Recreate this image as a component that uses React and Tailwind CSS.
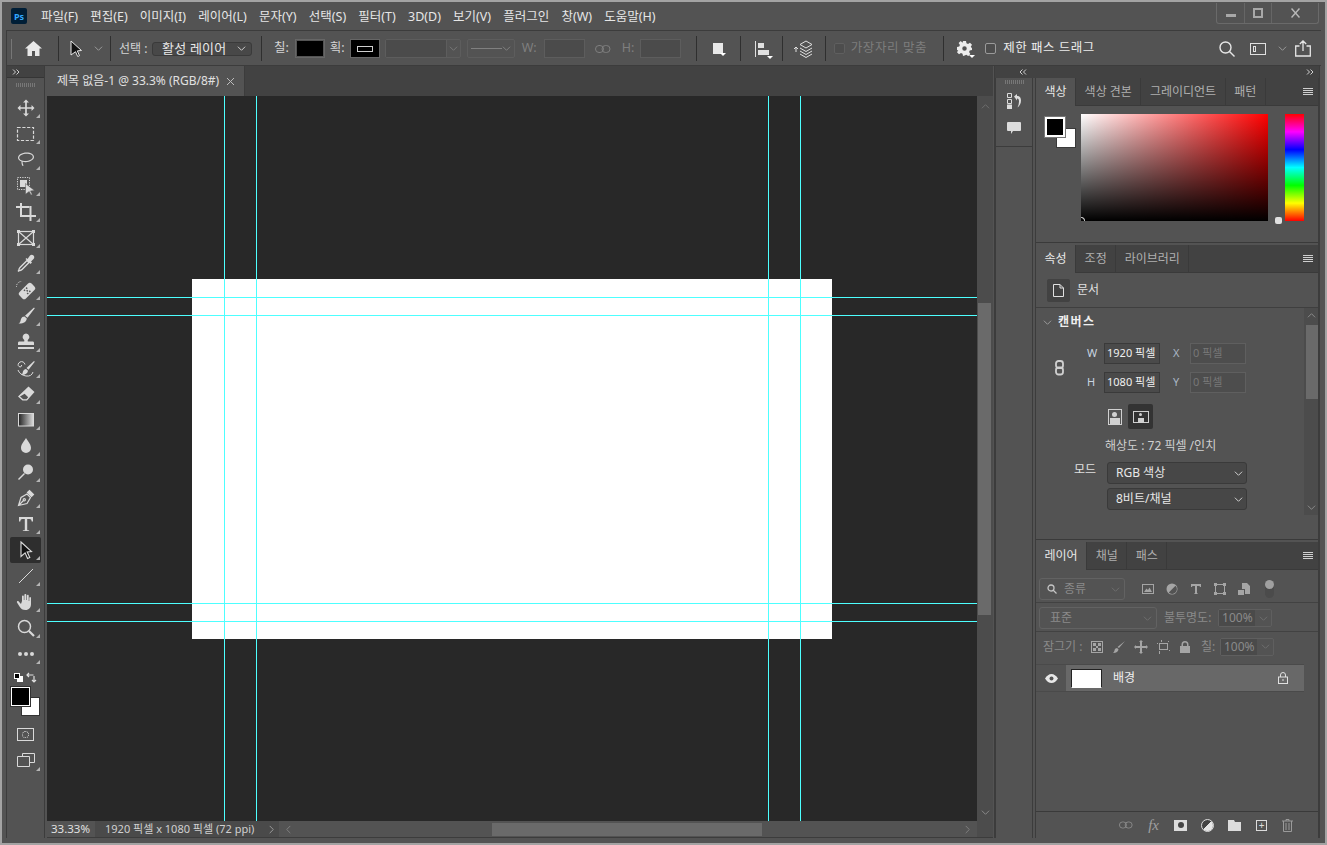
import React from 'react';

const G = ({ children, w = 20, h = 20, box = '0 0 20 20', className = '' }) => (
  <svg width={w} height={h} viewBox={box} className={className} fill="#d9d9d9" stroke="none">
    {children}
  </svg>
);

const Chevron = ({ color = '#9a9a9a', w = 9, dir = 'down' }) => (
  <svg width={w} height={w} viewBox="0 0 10 10" fill="none" stroke={color} strokeWidth="1.1">
    {dir === 'down' && <path d="M1 3l4 4 4-4" />}
    {dir === 'up' && <path d="M1 7l4-4 4 4" />}
    {dir === 'left' && <path d="M7 1L3 5l4 4" />}
    {dir === 'right' && <path d="M3 1l4 4-4 4" />}
  </svg>
);

const Double = ({ left }) => (
  <svg width="8" height="6" viewBox="0 0 8 6" fill="none" stroke="#d0d0d0" strokeWidth="1">
    {left ? <path d="M3.5 0.5L1 3l2.5 2.5M7 0.5L4.5 3 7 5.5" /> : <path d="M1 0.5L3.5 3 1 5.5M4.5 0.5L7 3 4.5 5.5" />}
  </svg>
);

const Grip = ({ w }) => (
  <div className={`h-[4px] ${w} bg-[repeating-linear-gradient(to_right,#777_0,#777_1px,transparent_1px,transparent_2px)]`} />
);

const Hamburger = () => (
  <div className="flex w-[10px] flex-col gap-[1px]">
    <div className="h-[1px] bg-[#cfcfcf]" />
    <div className="h-[1px] bg-[#cfcfcf]" />
    <div className="h-[1px] bg-[#cfcfcf]" />
    <div className="h-[1px] bg-[#cfcfcf]" />
  </div>
);

const toolIcons = [
  // move
  <path transform="translate(1.5 1.5) scale(.85)" d="M10 0l3.500 3.500h-2.500V9h5.500V6.500L20 10l-3.500 3.500V11H11v5.500h2.500L10 20l-3.500-3.500H9V11H3.500v2.500L0 10l3.500-3.500V9H9V3.500H6.500z" />,
  // marquee
  <rect x="1.5" y="3.5" width="16" height="13" fill="none" stroke="#d9d9d9" strokeWidth="1.2" strokeDasharray="3.200 1.600" />,
  // lasso
  <path d="M10.500 2.500c4.500 0 7.500 1.800 7.500 4.500s-4 5.200-8.500 5.200c-1 0-2-.1-2.800-.4-.3 1.100.2 2.500.9 3.600l-1 .7c-.8-1.200-1.300-2.800-1.100-4.700C3 10.700 2 9.300 2 7.800 2 4.800 6 2.500 10.500 2.500zm0 1.200c-3.800 0-7.300 1.800-7.300 4.100 0 2 2.500 3.200 6.300 3.200 3.800 0 7.300-2.200 7.300-4.100 0-2-2.500-3.200-6.300-3.200z" />,
  // object selection
  <g>
    <rect x="1.500" y="1.500" width="12" height="12" fill="none" stroke="#d9d9d9" strokeDasharray="1.200 1.200" />
    <rect x="4" y="4" width="7" height="7" />
    <path d="M9.500 7.500l9 7-4 .4 1.800 3.500-1.300.6-1.800-3.500-3.700 2.700z" stroke="#535353" strokeWidth=".5" />
  </g>,
  // crop
  <g fill="none" stroke="#d9d9d9" strokeWidth="2">
    <path d="M0 5h13.500M16 5h0M5 1v13h15" />
    <path d="M14.500 4v15" />
  </g>,
  // frame
  <g fill="none" stroke="#d9d9d9" strokeWidth="1.200">
    <rect x="2.500" y="3.500" width="15" height="13" />
    <path d="M2.500 3.500l15 13M17.500 3.500l-15 13" />
    <path d="M1 2h3v3H1zM16 2h3v3h-3zM1 15h3v3H1zM16 15h3v3h-3z" fill="#d9d9d9" stroke="none" />
  </g>,
  // eyedropper
  <path d="M14 1.500c1-1 2.500-1 3.500 0s1 2.500 0 3.500l-2.500 2.500 1 1-1.500 1.500-1-1-7 7c-.800.800-2 1.200-3 1.300l-1 .7-1-1 .7-1c.1-1 .5-2.200 1.300-3l7-7-1-1L10.500 4l1 1zM11 7.500l-6.500 6.500c-.5.500-.8 1.200-.9 1.900.7-.1 1.400-.4 1.900-.9L12 8.500z" fillRule="evenodd" />,
  // healing
  <g>
    <g transform="rotate(-45 11 11)">
      <rect x="2.500" y="6.500" width="17" height="9" rx="2.500" />
      <rect x="9" y="8" width="1.500" height="1.500" fill="#535353" />
      <rect x="12" y="8" width="1.500" height="1.500" fill="#535353" />
      <rect x="9" y="12.500" width="1.500" height="1.500" fill="#535353" />
      <rect x="12" y="12.500" width="1.500" height="1.500" fill="#535353" />
      <rect x="10.500" y="10.300" width="1.500" height="1.500" fill="#535353" />
    </g>
    <path d="M0.500 7a5 5 0 0 1 5-5.500" fill="none" stroke="#d9d9d9" strokeDasharray="1 1" />
  </g>,
  // brush
  <path d="M18 1.500l.8.800-7.300 9.500-2.500-2zM8.500 10.500l2.300 1.900c-.3 3.100-3.300 5.400-8.300 5.100 2-1 1.800-2.500 2.500-4.500.600-1.700 2-2.500 3.500-2.500z" />,
  // stamp
  <path d="M10 1.500a3.500 3.500 0 0 1 2 6.300c-.4.400-.5 1-.2 1.700h4.700c1 0 1.500.5 1.500 1.500v2H2v-2c0-1 .5-1.500 1.500-1.500h4.700c.3-.7.2-1.300-.2-1.700a3.500 3.500 0 0 1 2-6.300zM2 15h16v2H2z" />,
  // history brush
  <g>
    <path d="M18 3l.8.700-6.300 8-2-1.800zM10 11l2 1.700c-.3 2.500-2.700 4.500-7 4.300 1.800-1 1.500-2 2-3.600C7.500 12 8.800 11 10 11z" />
    <path d="M9 6.500C8.500 4 6 3 4 4S1.500 7.500 3 8.500s3 0 2.500-1.500M2 12c1 3 4 5.500 8 6s6-1 7-4" fill="none" stroke="#d9d9d9" />
  </g>,
  // eraser
  <path d="M12.500 2.500l6 5.500L11 16.500H6.500L2 12.500zM4 12.500l3.200 2.800h3.200l1.800-2-3.600-3.600z" fillRule="evenodd" />,
  // gradient
  <g>
    <defs>
      <linearGradient id="tg" x1="0" x2="1" y1="0" y2="0">
        <stop offset="0" stopColor="#222" />
        <stop offset="1" stopColor="#ddd" />
      </linearGradient>
    </defs>
    <rect x="2.500" y="3.500" width="15" height="12.500" fill="url(#tg)" stroke="#d9d9d9" />
  </g>,
  // burn / drop
  <path d="M10 2c2.500 4 5 6.500 5 10a5 5 0 0 1-10 0c0-3.500 2.500-6 5-10z" />,
  // dodge
  <g>
    <circle cx="12" cy="7.500" r="5" />
    <path d="M8.500 11.500L2.500 17.500" stroke="#d9d9d9" strokeWidth="1.500" />
  </g>,
  // pen
  <g fill="none" stroke="#d9d9d9" strokeWidth="1.200">
    <path d="M2.500 17.500l2.500-8 6-3.500 3.500 3.500-3.500 6zM2.500 17.500l5-5" />
    <path d="M11.500 4.500l2-2 4 4-2 2z" fill="#d9d9d9" />
    <circle cx="8.300" cy="11.700" r="1.100" />
  </g>,
  // type
  <path d="M3 3h14v4.500h-1.300c-.2-1.700-.7-2.500-2.200-2.500h-2.300v10.500c0 .6.500.9 2 .9V17H6.800v-.6c1.500 0 2-.3 2-.9V5H6.500C5 5 4.500 5.800 4.300 7.500H3z" />,
  // direct selection
  <path d="M5 2l10.500 9.500-4.300.4 2.600 5.600-2.200 1-2.500-5.700L5 16.500z" fill="#111" stroke="#dcdcdc" strokeWidth="1.100" />,
  // line
  <path d="M3 17L17 3" stroke="#d9d9d9" strokeWidth="1" />,
  // hand
  <path d="M6 9V4.500c0-1.300 1.800-1.300 1.800 0V8h.6V3c0-1.300 1.900-1.300 1.900 0v5h.6V3.800c0-1.300 1.800-1.300 1.800 0V9h.6V6c0-1.300 1.700-1.300 1.700 0v6c0 3.500-2 6-5.500 6-3 0-4.500-1-6-3.500L1 10.500c-.6-1.100.9-2 1.700-1L5 12z" />,
  // zoom
  <g fill="none" stroke="#d9d9d9">
    <circle cx="8.500" cy="8.500" r="6" strokeWidth="1.500" />
    <path d="M13 13l5 5" strokeWidth="2.200" />
  </g>,
  // more
  <g>
    <circle cx="4" cy="10" r="2" />
    <circle cx="10" cy="10" r="2" />
    <circle cx="16" cy="10" r="2" />
  </g>,
];

const Tool = ({ children, active }) => (
  <div className={`relative flex h-[26px] w-[31px] items-center justify-center rounded-[2px] ${active ? 'bg-[#2e2e2e]' : ''}`}>
    <G>{children}</G>
    <span className="absolute bottom-[3px] right-[1px] h-0 w-0 border-b-[4px] border-l-[4px] border-b-[#b5b5b5] border-l-transparent" />
  </div>
);

const Toolbar = () => (
  <aside className="flex w-[39px] shrink-0 flex-col items-center border-x border-[#3c3c3c] bg-[#535353]">
    <div className="flex h-[12px] w-full items-center border-b border-[#353535] bg-[#424242] pl-[5px]">
      <Double />
    </div>
    <div className="mt-[5px] mb-[8px]"><Grip w="w-[19px]" /></div>
    {toolIcons.map((icon, i) => (
      <Tool key={i} active={i === 17}>{icon}</Tool>
    ))}
    <div className="mt-[5px] flex w-[31px] items-center justify-between px-[4px]">
      <div className="relative h-[9px] w-[9px]">
        <span className="absolute right-0 bottom-0 h-[6px] w-[6px] bg-white" />
        <span className="absolute left-0 top-0 h-[6px] w-[6px] border border-white bg-black" />
      </div>
      <svg width="11" height="11" viewBox="0 0 11 11" fill="none" stroke="#e0e0e0" strokeWidth="1.200">
        <path d="M1 3h6.500M3 1L1 3l2 2M8 4v6M6 8l2 2 2-2" />
      </svg>
    </div>
    <div className="relative mt-[4px] h-[29px] w-[31px]">
      <span className="absolute right-[1px] bottom-0 h-[19px] w-[19px] border border-[#333] bg-white" />
      <span className="absolute left-[1px] top-0 h-[19px] w-[19px] border border-white bg-black outline outline-[#333]" />
    </div>
    <div className="mt-[5px] flex h-[26px] items-center">
      <div className="flex h-[13px] w-[17px] items-center justify-center border border-[#d9d9d9]">
        <span className="h-[7px] w-[7px] rounded-full border border-dotted border-[#d9d9d9]" />
      </div>
    </div>
    <div className="relative flex h-[26px] w-[31px] items-center justify-center">
      <svg width="18" height="14" viewBox="0 0 18 14" fill="none" stroke="#d9d9d9">
        <path d="M5.500 3V.5h12v9H13M.5 3.500h12v10H.5z" />
      </svg>
      <span className="absolute bottom-[2px] right-[1px] h-0 w-0 border-b-[4px] border-l-[4px] border-b-[#b5b5b5] border-l-transparent" />
    </div>
  </aside>
);

const menus = ['파일(F)', '편집(E)', '이미지(I)', '레이어(L)', '문자(Y)', '선택(S)', '필터(T)', '3D(D)', '보기(V)', '플러그인', '창(W)', '도움말(H)'];

const MenuBar = () => (
  <header className="flex h-[28px] shrink-0 items-center bg-[#535353] pl-[9px]">
    <div className="flex h-[16px] w-[16px] items-center justify-center rounded-[2px] bg-[#001e36] text-[9px] font-bold leading-none text-[#31a8ff]">Ps</div>
    <nav className="ml-[14px] mt-[2px] flex gap-[12.2px] text-[12.5px] text-[#e6e6e6]">
      {menus.map((m) => (
        <span key={m} className="whitespace-nowrap">{m}</span>
      ))}
    </nav>
    <div className="mr-[6px] ml-auto flex h-[21px] -translate-y-[3px] items-center rounded-b-[3px] border border-t-0 border-[#6a6a6a]">
      <div className="flex h-full w-[28px] items-center justify-center border-r border-[#666]">
        <span className="mt-[6px] h-[3px] w-[10px] bg-[#a8a8a8]" />
      </div>
      <div className="flex h-full w-[27px] items-center justify-center border-r border-[#666]">
        <span className="h-[10px] w-[10px] border-[2px] border-[#a8a8a8]" />
      </div>
      <div className="flex h-full w-[46px] items-center justify-center">
        <svg width="9" height="10" viewBox="0 0 9 10" stroke="#b8b8b8" strokeWidth="1.500"><path d="M.5 .5l8 9M8.500 .5l-8 9" /></svg>
      </div>
    </div>
  </header>
);

const Divider = ({ ml = 'ml-0' }) => <div className={`h-[25px] w-[1px] shrink-0 bg-[#2f2f2f] ${ml}`} />;

const Corner = () => <span className="absolute -bottom-[2px] -right-[3px] h-0 w-0 border-x-[3px] border-t-[3px] border-x-transparent border-t-white" />;

const OptionsBar = () => (
  <div className="relative mx-[4px] flex h-[36px] shrink-0 items-center border-y border-l border-[#3c3c3c] bg-[#535353] pt-[1px] text-[12.5px] text-[#d5d5d5]">
    <div className="ml-[4px] mr-[9px]"><Grip w="w-[2px] !h-[20px]" /></div>
    <svg width="17" height="15" viewBox="0 0 17 15" fill="#e8e8e8" className="ml-[3px]">
      <path d="M8.500 0L17 7.500h-2.500V15H10v-5H7v5H2.500V7.500H0z" />
    </svg>
    <Divider ml="ml-[16px]" />
    <svg width="13" height="17" viewBox="0 0 13 17" className="ml-[11px]" fill="#111" stroke="#e8e8e8">
      <path d="M1 1l10.500 9.500-4.200.4 2.200 4.800-1.800.8-2.200-4.800L1 15z" />
    </svg>
    <span className="ml-[11px]"><Chevron /></span>
    <Divider ml="ml-[7px]" />
    <span className="ml-[8px] w-[30px] whitespace-nowrap text-[12px]">선택 :</span>
    <div className="ml-[3px] flex h-[14px] w-[100px] items-center justify-between rounded-[3px] border border-[#3a3a3a] bg-[#484848] pl-[9px] pr-[5px] text-[13px] tracking-[0.2px] text-[#e8e8e8]">
      <span className="whitespace-nowrap leading-none">활성 레이어</span>
      <Chevron color="#cfcfcf" />
    </div>
    <Divider ml="ml-[9px]" />
    <span className="ml-[12px] whitespace-nowrap">칠:</span>
    <div className="ml-[6px] flex h-[19px] w-[30px] items-center justify-center border border-[#666]">
      <span className="h-[15px] w-[26px] bg-black" />
    </div>
    <span className="ml-[5px] whitespace-nowrap">획:</span>
    <div className="ml-[5px] flex h-[19px] w-[30px] items-center justify-center border border-[#666] bg-black">
      <span className="h-[6px] w-[16px] border border-[#cfcfcf]" />
    </div>
    <div className="ml-[5px] flex h-[19px] w-[76px] items-center rounded-[2px] border border-[#5d5d5d]">
      <span className="h-full w-[60px] bg-[#4b4b4b]" />
      <span className="flex h-full flex-1 items-center justify-center border-l border-[#5d5d5d]"><Chevron color="#777" /></span>
    </div>
    <div className="ml-[6px] flex h-[19px] w-[48px] items-center justify-between rounded-[2px] border border-[#5d5d5d] px-[3px]">
      <span className="h-[1px] w-[31px] bg-[#808080]" />
      <Chevron color="#808080" />
    </div>
    <span className="ml-[7px] w-[15px] whitespace-nowrap text-[#7f7f7f]">W:</span>
    <span className="ml-[7px] h-[19px] w-[41px] border border-[#5d5d5d] bg-[#4b4b4b]" />
    <svg width="16" height="8" viewBox="0 0 16 8" fill="none" stroke="#7f7f7f" className="ml-[10px]">
      <rect x=".5" y=".5" width="8" height="7" rx="3.500" />
      <rect x="7" y=".5" width="8" height="7" rx="3.500" />
    </svg>
    <span className="ml-[11px] w-[12px] whitespace-nowrap text-[#7f7f7f]">H:</span>
    <span className="ml-[6px] h-[19px] w-[41px] border border-[#5d5d5d] bg-[#4b4b4b]" />
    <Divider ml="ml-[15px]" />
    <span className="relative ml-[16px] h-[11px] w-[10px] bg-[#e8e8e8]"><Corner /></span>
    <Divider ml="ml-[17px]" />
    <span className="relative ml-[14px]">
      <svg width="15" height="16" viewBox="0 0 15 16" fill="#e0e0e0" className="block">
        <path d="M0 0h1v16H0zM3 2h6v5H3zM3 9h11v5H3z" />
      </svg>
      <Corner />
    </span>
    <Divider ml="ml-[12px]" />
    <svg width="19" height="18" viewBox="0 0 19 18" fill="none" stroke="#e0e0e0" className="ml-[11px]">
      <path d="M0 9l2-2 2 2M2 8v4" />
      <path d="M12 1l6 3.500-6 3.500-6-3.500zM6 8l6 3.500L18 8M6 11l6 3.500 6-3.500M6 14l6 3.500 6-3.500" />
    </svg>
    <Divider ml="ml-[12px]" />
    <span className="ml-[8px] h-[11px] w-[11px] rounded-[2px] border border-[#5f5f5f] bg-[#4d4d4d]" />
    <span className="ml-[6px] whitespace-nowrap tracking-[0.6px] text-[#7d7d7d]">가장자리 맞춤</span>
    <Divider ml="ml-[16px]" />
    <span className="relative ml-[13px]">
      <svg width="15" height="15" viewBox="0 0 20 20" fill="#ececec" className="block">
        <path fillRule="evenodd" d="M8 0h4l.6 3 2.100.9 2.600-1.700 2.800 2.800-1.700 2.600.9 2.100L20 8v4l-3 .6-.9 2.100 1.700 2.600-2.800 2.800-2.600-1.700-2.100.9L8 20 7.400 17l-2.100-.9-2.600 1.700L0 15l1.700-2.600L.6 12.300 0 12V8l3-.6.9-2.100L2.200 2.700 5 0l2.300 2.200zM10 7a3 3 0 1 0 0 6 3 3 0 0 0 0-6z" />
      </svg>
      <Corner />
    </span>
    <span className="ml-[13px] h-[11px] w-[11px] rounded-[2px] border border-[#9a9a9a] bg-[#4d4d4d]" />
    <span className="ml-[7px] whitespace-nowrap tracking-[0.5px] text-[#ededed]">제한 패스 드래그</span>
    <div className="ml-auto mr-[10px] flex items-center">
      <svg width="16" height="16" viewBox="0 0 16 16" fill="none" stroke="#e6e6e6" strokeWidth="1.400"><circle cx="6.500" cy="6.500" r="5.500" /><path d="M10.500 10.500l5 5" /></svg>
      <span className="ml-[15px] flex h-[12px] w-[16px] items-center border border-[#e0e0e0] pl-[2px]"><span className="h-[6px] w-[3px] border border-[#e0e0e0]" /></span>
      <span className="ml-[12px]"><Chevron /></span>
      <svg width="16" height="17" viewBox="0 0 16 17" fill="none" stroke="#e6e6e6" strokeWidth="1.300" className="ml-[8px]"><path d="M4.500 6H.7v10h14.600V6h-3.800M8 11V1M4.800 4L8 1l3.200 3" /></svg>
    </div>
  </div>
);

const Canvas = () => (
  <div className="relative flex flex-1 items-center justify-center overflow-hidden bg-[#282828]">
    <div className="h-[360px] w-[640px] bg-white" />
    <span className="absolute inset-y-0 left-[177px] w-[1px] bg-[#4dffff]" />
    <span className="absolute inset-y-0 left-[209px] w-[1px] bg-[#4dffff]" />
    <span className="absolute inset-y-0 left-[721px] w-[1px] bg-[#4dffff]" />
    <span className="absolute inset-y-0 left-[753px] w-[1px] bg-[#4dffff]" />
    <span className="absolute inset-x-0 top-[201px] h-[1px] bg-[#4dffff]" />
    <span className="absolute inset-x-0 top-[219px] h-[1px] bg-[#4dffff]" />
    <span className="absolute inset-x-0 top-[507px] h-[1px] bg-[#4dffff]" />
    <span className="absolute inset-x-0 top-[525px] h-[1px] bg-[#4dffff]" />
  </div>
);

const StatusBar = () => (
  <div className="flex h-[16px] shrink-0 items-center bg-[#535353] text-[11.5px] text-[#e0e0e0]">
    <span className="w-[48px] pl-[4px]">33.33%</span>
    <div className="flex h-full w-[184px] items-center justify-between bg-[#4a4a4a] pl-[10px] pr-[3px] text-[11px] text-[#d0d0d0]">
      <span className="whitespace-nowrap">1920 픽셀 x 1080 픽셀 (72 ppi)</span>
      <Chevron dir="right" />
    </div>
    <span className="ml-[5px]"><Chevron dir="left" color="#808080" /></span>
    <span className="ml-[199px] h-[13px] w-[270px] bg-[#6a6a6a]" />
    <span className="ml-auto mr-[5px]"><Chevron dir="right" color="#808080" /></span>
  </div>
);

const Tabs = ({ items }) => (
  <div className="flex h-[28px] shrink-0 items-stretch border-b border-[#3a3a3a] bg-[#424242] text-[12px]">
    {items.map((t, i) => (
      <span
        key={t}
        className={`flex items-center whitespace-nowrap border-r border-[#3a3a3a] px-[8.5px] ${i === 0 ? 'z-10 -mb-[1px] bg-[#535353] text-[#e8e8e8]' : 'text-[#b0b0b0]'}`}
      >
        {t}
      </span>
    ))}
    <span className="ml-auto mr-[5px] self-center"><Hamburger /></span>
  </div>
);

const ColorPanel = () => (
  <section className="h-[165px] shrink-0 border-b border-[#3a3a3a] bg-[#535353]">
    <Tabs items={['색상', '색상 견본', '그레이디언트', '패턴']} />
    <div className="flex pl-[9px] pt-[8px]">
      <div className="relative mt-[3px] h-[31px] w-[31px] shrink-0">
        <span className="absolute right-0 bottom-0 h-[20px] w-[20px] border border-[#3a3a3a] bg-white" />
        <span className="absolute left-0 top-0 h-[20px] w-[20px] border-2 border-white bg-black outline outline-[#777]" />
      </div>
      <div className="relative ml-[5px] h-[107px] w-[187px] overflow-hidden bg-[linear-gradient(to_top,#000,transparent),linear-gradient(to_right,#fff,#f00)]">
        <span className="absolute -bottom-[3px] -left-[3px] h-[7px] w-[7px] rounded-full border border-white" />
      </div>
      <div className="relative ml-[17px] h-[107px] w-[19px] bg-[linear-gradient(to_bottom,#f00,#f0f,#00f,#0ff,#0f0,#ff0,#f00)]">
        <span className="absolute -bottom-[3px] -left-[10px] h-[7px] w-[7px] rounded-[2px] bg-[#e0e0e0]" />
      </div>
    </div>
  </section>
);

const Field = ({ label, value, off }) => (
  <div className="flex items-center">
    <span className={`w-[14px] text-[11px] ${off ? 'text-[#a9b6c4]' : 'text-[#c9d5e0]'}`}>{label}</span>
    <span className={`ml-[3px] flex h-[21px] w-[56px] items-center border px-[2px] text-[11px] whitespace-nowrap ${off ? 'border-[#5f5f5f] bg-[#4d4d4d] text-[#777]' : 'border-[#3a3a3a] bg-[#4a4a4a] text-[#f0f0f0]'}`}>{value}</span>
  </div>
);

const SelectBox = ({ text }) => (
  <div className="flex h-[22px] w-[140px] items-center justify-between rounded-[3px] border border-[#3a3a3a] bg-[#474747] pl-[8px] pr-[3px] text-[12px] text-[#e8e8e8]">
    <span className="whitespace-nowrap">{text}</span>
    <Chevron color="#cfcfcf" />
  </div>
);

const PropsPanel = () => (
  <section className="mt-[2px] h-[295px] shrink-0 border-b border-[#3a3a3a] bg-[#535353]">
    <Tabs items={['속성', '조정', '라이브러리']} />
    <div className="flex h-[35px] items-center border-b border-[#3f3f3f] pl-[11px]">
      <span className="flex h-[23px] w-[23px] items-center justify-center rounded-[2px] bg-[#424242]">
        <svg width="11" height="13" viewBox="0 0 11 13" fill="none" stroke="#e0e0e0"><path d="M.5.500h6.500l3.500 3.500v8.500h-10zM7 .5V4h3.500" /></svg>
      </span>
      <span className="ml-[7px] text-[12px] text-[#e0e0e0]">문서</span>
    </div>
    <div className="flex">
      <div className="w-[268px] shrink-0">
        <div className="flex h-[28px] items-center pl-[7px]">
          <Chevron />
          <span className="ml-[6px] text-[12px] font-bold tracking-[1.500px] text-[#efefef]">캔버스</span>
        </div>
        <div className="mt-[7px] flex">
          <svg width="9" height="16" viewBox="0 0 9 16" fill="none" stroke="#d0d0d0" strokeWidth="1.800" className="ml-[19px] mt-[17px]"><rect x="1" y="1" width="7" height="7" rx="2.500" /><rect x="1" y="7.500" width="7" height="7" rx="2.500" /></svg>
          <div className="ml-[23px] grid grid-cols-[86px_74px] gap-y-[8px]">
            <Field label="W" value="1920 픽셀" />
            <Field label="X" value="0 픽셀" off />
            <Field label="H" value="1080 픽셀" />
            <Field label="Y" value="0 픽셀" off />
          </div>
        </div>
        <div className="mt-[11px] ml-[72px] flex items-center gap-[6px]">
          <span className="relative h-[16px] w-[14px] overflow-hidden border border-[#d0d0d0]">
            <span className="absolute left-[3px] top-[2px] h-[5px] w-[5px] rounded-full bg-[#d0d0d0]" />
            <span className="absolute bottom-0 left-[1px] h-[6px] w-[10px] bg-[#d0d0d0]" />
          </span>
          <span className="flex h-[25px] w-[25px] items-center justify-center rounded-[2px] bg-[#333]">
            <span className="relative h-[12px] w-[16px] overflow-hidden border border-[#d0d0d0]">
              <span className="absolute left-[5px] top-[1px] h-[3px] w-[3px] rounded-full bg-[#d0d0d0]" />
              <span className="absolute bottom-0 left-[4px] h-[4px] w-[6px] bg-[#d0d0d0]" />
            </span>
          </span>
        </div>
        <div className="mt-[8px] ml-[69px] text-[12px] text-[#d0d0d0]">해상도 : 72 픽셀 /인치</div>
        <div className="mt-[7px] flex">
          <span className="ml-[38px] mt-[-1px] w-[33px] text-[12px] text-[#e0e0e0]">모드</span>
          <div className="flex flex-col gap-[4px]">
            <SelectBox text="RGB 색상" />
            <SelectBox text="8비트/채널" />
          </div>
        </div>
      </div>
      <div className="relative flex h-[207px] w-[15px] flex-col items-center justify-between bg-[#4c4c4c] py-[3px]">
        <Chevron dir="up" color="#8a8a8a" />
        <span className="absolute left-[2px] top-[17px] h-[74px] w-[12px] bg-[#6a6a6a]" />
        <Chevron color="#8a8a8a" />
      </div>
    </div>
  </section>
);

const FilterIcon = ({ children }) => (
  <svg width="14" height="14" viewBox="0 0 14 14" fill="#a5a5a5">{children}</svg>
);

const LayersPanel = () => (
  <section className="mt-[2px] flex flex-1 flex-col bg-[#535353]">
    <Tabs items={['레이어', '채널', '패스']} />
    <div className="flex h-[33px] items-center border-b border-[#424242] pl-[3px] pt-[6px]">
      <div className="flex h-[22px] w-[86px] items-center rounded-[3px] border border-[#626262] pl-[7px] text-[12px] text-[#8a8a8a]">
        <svg width="10" height="10" viewBox="0 0 10 10" fill="none" stroke="#c5c5c5" strokeWidth="1.300"><circle cx="4" cy="4" r="3" /><path d="M6 6l3.500 3.500" /></svg>
        <span className="ml-[7px]">종류</span>
        <span className="ml-auto mr-[4px]"><Chevron color="#6e6e6e" /></span>
      </div>
      <div className="ml-[16px] flex items-center gap-[10px]">
        <FilterIcon><path d="M1 2h12v10H1zM2 3v8h10V3zM3 10l2.500-3.500L7 8l1.500-2.500L11 10z" fillRule="evenodd" /></FilterIcon>
        <FilterIcon><path d="M7 1.500a5.500 5.500 0 1 1 0 11 5.500 5.500 0 0 1 0-11zM10.500 3.800L3.800 10.500A4.500 4.500 0 0 0 10.500 3.800z" fillRule="evenodd" /></FilterIcon>
        <FilterIcon><path d="M2 2h10v3h-1c-.2-.8-.5-1-1-1H8v7c0 .4.300.5 1 .5v.5H5v-.5c.7 0 1-.100 1-.5V4H4c-.5 0-.8.200-1 1H2z" /></FilterIcon>
        <FilterIcon><path d="M1 1h3v1h6V1h3v3h-1v6h1v3h-3v-1H4v1H1v-3h1V4H1zM3 4v6h1v1h6v-1h1V4h-1V3H4v1z" fillRule="evenodd" /></FilterIcon>
        <FilterIcon><path d="M5 1h5l3 3v8H8V7H5zM1 8h6v5H1z" /></FilterIcon>
      </div>
      <div className="relative ml-[14px] h-[17px] w-[9px] rounded-full bg-[#4b4b4b]">
        <span className="absolute -top-[1px] left-0 h-[9px] w-[9px] rounded-full bg-[#a0a0a0]" />
      </div>
    </div>
    <div className="flex h-[29px] items-center border-b border-[#424242] pl-[3px] pt-[2px] text-[12px] text-[#8a8a8a]">
      <div className="flex h-[22px] w-[118px] items-center justify-between rounded-[3px] border border-[#626262] pl-[10px] pr-[4px]">
        <span>표준</span>
        <Chevron color="#6e6e6e" />
      </div>
      <span className="ml-[7px] whitespace-nowrap">불투명도:</span>
      <div className="ml-[7px] flex h-[18px] w-[54px] items-center rounded-[2px] border border-[#5f5f5f]">
        <span className="flex h-full w-[36px] items-center justify-center bg-[#4a4a4a] text-[12px]">100%</span>
        <span className="flex flex-1 justify-center"><Chevron color="#6e6e6e" /></span>
      </div>
    </div>
    <div className="flex h-[29px] items-center pl-[7px] text-[12px] text-[#8a8a8a]">
      <span className="w-[44px] whitespace-nowrap">잠그기 :</span>
      <div className="ml-[3px] flex items-center gap-[8px]">
        <FilterIcon><path d="M1 1h12v12H1zM2 2v10h10V2zM3 3h3v3H3zM8 3h3v3H8zM6 6h2v2H6zM3 8h3v3H3zM8 8h3v3H8z" fillRule="evenodd" /></FilterIcon>
        <FilterIcon><path d="M13 1l-6 7-1.500-1zM5 8l1.500 1.200c-.2 2-2 3.800-5.500 3.800 1.200-.8 1.300-2 1.700-3.200C3 8.700 4 8 5 8z" /></FilterIcon>
        <FilterIcon><path d="M7 0l2 2H8v4h4V5l2 2-2 2V8H8v4h1l-2 2-2-2h1V8H2v1L0 7l2-2v1h4V2H5z" /></FilterIcon>
        <FilterIcon><path d="M3 3h9v7H3zM4 4v5h7V4zM1 3h1v1H1zM5 0h1v2H5zM12 1h1v1h-1zM3 11h1v3H3zM13 10h1v1h-1z" fillRule="evenodd" /></FilterIcon>
        <FilterIcon><path d="M7 1a3.500 3.500 0 0 1 3.500 3.500V6H12v7H2V6h1.500V4.500A3.500 3.500 0 0 1 7 1zm0 1.500a2 2 0 0 0-2 2V6h4V4.500a2 2 0 0 0-2-2z" /></FilterIcon>
      </div>
      <span className="ml-[9px] whitespace-nowrap">칠:</span>
      <div className="ml-[5px] flex h-[18px] w-[54px] items-center rounded-[2px] border border-[#5f5f5f]">
        <span className="flex h-full w-[36px] items-center justify-center bg-[#4a4a4a] text-[12px]">100%</span>
        <span className="flex flex-1 justify-center"><Chevron color="#6e6e6e" /></span>
      </div>
    </div>
    <div className="mt-[3px] flex h-[28px] w-[268px] items-center border-y border-[#4a4a4a]">
      <span className="flex h-full w-[30px] shrink-0 items-center justify-center">
        <svg width="13" height="9" viewBox="0 0 13 9"><path d="M0 4.500C2 1.500 4 0 6.500 0S11 1.500 13 4.500C11 7.500 9 9 6.500 9S2 7.500 0 4.500z" fill="#e8e8e8" /><circle cx="6.500" cy="4.500" r="2" fill="#535353" /></svg>
      </span>
      <div className="flex h-full flex-1 items-center bg-[#686868]">
        <span className="ml-[5px] h-[19px] w-[31px] border border-t-[#222] border-x-[#222] border-b-white bg-white" />
        <span className="ml-[11px] text-[12px] text-[#f0f0f0]">배경</span>
        <svg width="10" height="12" viewBox="0 0 10 12" fill="none" stroke="#e0e0e0" className="ml-auto mr-[16px]"><rect x=".5" y="5" width="9" height="6.500" /><path d="M2.500 5V3a2.500 2.500 0 0 1 5 0v2" /><path d="M4.500 8h1" strokeWidth="2" /></svg>
      </div>
    </div>
    <div className="flex-1" />
    <div className="flex h-[27px] items-center justify-end gap-[15px] border-t border-[#3a3a3a] pr-[25px]">
      <svg width="14" height="8" viewBox="0 0 16 8" fill="none" stroke="#8e8e8e"><rect x=".5" y=".5" width="8" height="7" rx="3.500" /><rect x="7" y=".5" width="8" height="7" rx="3.500" /></svg>
      <span className="font-['Liberation_Serif',serif] text-[15px] italic text-[#a0a0a0]">fx</span>
      <span className="flex h-[11px] w-[13px] items-center justify-center bg-[#dcdcdc]"><span className="h-[6px] w-[6px] rounded-full bg-[#444]" /></span>
      <span className="h-[11px] w-[11px] rounded-full bg-[linear-gradient(135deg,#444_50%,#e6e6e6_50%)] outline outline-[#dcdcdc]" />
      <svg width="13" height="11" viewBox="0 0 13 11" fill="#dcdcdc"><path d="M0 0h6l1 2h6v9H0z" /></svg>
      <span className="flex h-[11px] w-[11px] items-center justify-center border border-[#dcdcdc] text-[10px] leading-none text-[#dcdcdc]">+</span>
      <svg width="11" height="13" viewBox="0 0 11 13" fill="none" stroke="#9a9a9a"><path d="M0 2h11M4 2V.5h3V2M1.500 2v10.500h8V2M4 4v7M7 4v7" /></svg>
    </div>
  </section>
);

export default function App() {
  return (
    <div className="flex h-[845px] w-[1327px] flex-col overflow-hidden border-2 border-[#a3a3a3] bg-[#535353] font-['Noto_Sans','Noto_Sans_CJK_KR',sans-serif]">
      <MenuBar />
      <OptionsBar />
      <main className="mx-[4px] flex h-[772px] shrink-0">
        <Toolbar />
        <div className="ml-[2px] flex w-[946px] shrink-0 flex-col border-b border-[#3c3c3c]">
          <div className="flex h-[30px] shrink-0 bg-[#424242]">
            <div className="flex w-[198px] items-center justify-between border-r border-[#3c3c3c] bg-[#535353] pl-[10px] pr-[10px] text-[12px] text-[#e0e0e0]">
              <span className="whitespace-nowrap">제목 없음-1 @ 33.3% (RGB/8#)</span>
              <svg width="7" height="7" viewBox="0 0 7 7" stroke="#bcbcbc"><path d="M0 0l7 7M7 0L0 7" /></svg>
            </div>
          </div>
          <div className="flex flex-1 overflow-hidden">
            <div className="flex flex-1 flex-col">
              <Canvas />
              <StatusBar />
            </div>
            <div className="relative flex w-[16px] flex-col items-center justify-between bg-[#4c4c4c] pb-[20px] pt-[6px]">
              <Chevron dir="up" color="#6e6e6e" />
              <span className="absolute left-[1px] top-[207px] h-[312px] w-[13px] bg-[#6a6a6a]" />
              <Chevron color="#8a8a8a" />
            </div>
          </div>
        </div>
        <div className="ml-[1px] flex w-[326px] shrink-0 flex-col border-x border-[#3c3c3c]">
          <div className="flex h-[12px] shrink-0 items-center justify-between bg-[#424242] pl-[24px] pr-[5px]">
            <Double left />
            <Double />
          </div>
          <div className="flex flex-1">
            <div className="flex w-[38px] shrink-0 flex-col border-x border-[#3c3c3c]">
              <div className="flex h-[69px] flex-col items-center border-b border-[#3c3c3c] pt-[2px]">
                <Grip w="w-[19px]" />
                <svg width="15" height="16" viewBox="0 0 15 16" fill="none" stroke="#dcdcdc" className="mt-[9px]">
                  <path d="M.5.500h4v4h-4zM.5 6.500h4v4h-4z" />
                  <path d="M0 11.500h5V16H0z" fill="#dcdcdc" stroke="none" />
                  <path d="M7 3.500l3-2.500v2c3 0 4 2 4 4.500 0 3-1.500 5.500-3.500 7 1-2 1.500-4 1.500-6 0-2-.5-3-2-3v2z" fill="#dcdcdc" stroke="none" />
                </svg>
                <svg width="14" height="13" viewBox="0 0 14 13" fill="#dcdcdc" className="mt-[13px]"><path d="M1 0h12a1 1 0 0 1 1 1v7a1 1 0 0 1-1 1H6l-2 3V9H1a1 1 0 0 1-1-1V1a1 1 0 0 1 1-1z" /></svg>
              </div>
            </div>
            <div className="ml-[2px] flex w-[284px] flex-col border-x border-[#3c3c3c]">
              <ColorPanel />
              <PropsPanel />
              <LayersPanel />
            </div>
          </div>
        </div>
      </main>
    </div>
  );
}
